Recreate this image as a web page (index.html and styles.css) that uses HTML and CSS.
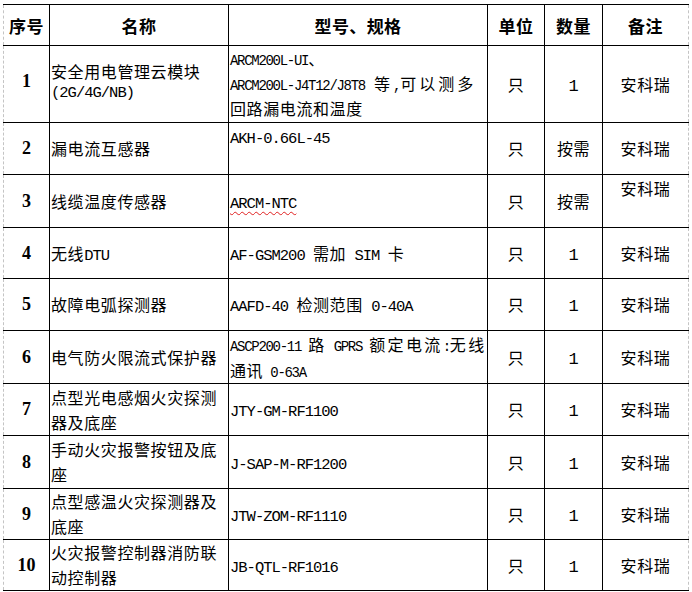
FILE: index.html
```html
<!DOCTYPE html>
<html lang="zh-CN">
<head>
<meta charset="utf-8">
<title>设备清单</title>
<link rel="stylesheet" href="styles.css">
</head>
<body>
<div class="sheet">
<table class="list">
  <colgroup>
    <col class="c-no"><col class="c-name"><col class="c-spec"><col class="c-unit"><col class="c-qty"><col class="c-note">
  </colgroup>
  <thead>
    <tr class="h-head">
      <th>序号</th><th>名称</th><th>型号、规格</th><th>单位</th><th>数量</th><th>备注</th>
    </tr>
  </thead>
  <tbody>
    <tr class="h-77">
      <td class="no no-1">1</td>
      <td class="name name-1"><div class="l1">安全用电管理云模块</div><div class="l2"><span class="en">(2G/4G/NB)</span></div></td>
      <td class="spec spec-1"><span class="en sm">ARCM200L-UI</span>、<br><span class="en sm">ARCM200L-J4T12/J8T8 </span><span class="wide">等<span class="en sm">,</span>可以测多</span><br>回路漏电流和温度</td>
      <td class="unit">只</td><td class="qty"><span class="num">1</span></td><td class="note">安科瑞</td>
    </tr>
    <tr class="h-52">
      <td class="no">2</td>
      <td class="name">漏电流互感器</td>
      <td class="spec top"><span class="en">AKH-0.66L-45</span></td>
      <td class="unit">只</td><td class="qty">按需</td><td class="note">安科瑞</td>
    </tr>
    <tr class="h-53">
      <td class="no">3</td>
      <td class="name">线缆温度传感器</td>
      <td class="spec"><span class="en wavy">ARCM-NTC</span></td>
      <td class="unit">只</td><td class="qty">按需</td><td class="note top">安科瑞</td>
    </tr>
    <tr class="h-51">
      <td class="no">4</td>
      <td class="name">无线<span class="en">DTU</span></td>
      <td class="spec"><span class="en">AF-GSM200 </span>需加<span class="en"> SIM </span>卡</td>
      <td class="unit">只</td><td class="qty"><span class="num">1</span></td><td class="note">安科瑞</td>
    </tr>
    <tr class="h-52">
      <td class="no">5</td>
      <td class="name">故障电弧探测器</td>
      <td class="spec"><span class="en">AAFD-40 </span>检测范围<span class="en"> 0-40A</span></td>
      <td class="unit">只</td><td class="qty"><span class="num">1</span></td><td class="note">安科瑞</td>
    </tr>
    <tr class="h-52">
      <td class="no">6</td>
      <td class="name">电气防火限流式保护器</td>
      <td class="spec top"><span class="tight"><span class="en sm">ASCP200-11 </span>路<span class="en sm"> GPRS </span>额定电流<span class="en sm">:</span>无线</span><br>通讯<span class="en sm"> 0-63A</span></td>
      <td class="unit">只</td><td class="qty"><span class="num">1</span></td><td class="note">安科瑞</td>
    </tr>
    <tr class="h-52">
      <td class="no">7</td>
      <td class="name">点型光电感烟火灾探测<br>器及底座</td>
      <td class="spec"><span class="en">JTY-GM-RF1100</span></td>
      <td class="unit">只</td><td class="qty"><span class="num">1</span></td><td class="note">安科瑞</td>
    </tr>
    <tr class="h-53">
      <td class="no">8</td>
      <td class="name">手动火灾报警按钮及底<br>座</td>
      <td class="spec"><span class="en">J-SAP-M-RF1200</span></td>
      <td class="unit">只</td><td class="qty"><span class="num">1</span></td><td class="note">安科瑞</td>
    </tr>
    <tr class="h-51">
      <td class="no">9</td>
      <td class="name">点型感温火灾探测器及<br>底座</td>
      <td class="spec"><span class="en">JTW-ZOM-RF1110</span></td>
      <td class="unit">只</td><td class="qty"><span class="num">1</span></td><td class="note">安科瑞</td>
    </tr>
    <tr class="h-51">
      <td class="no">10</td>
      <td class="name">火灾报警控制器消防联<br>动控制器</td>
      <td class="spec"><span class="en">JB-QTL-RF1016</span></td>
      <td class="unit">只</td><td class="qty"><span class="num">1</span></td><td class="note">安科瑞</td>
    </tr>
  </tbody>
</table>
</div>
</body>
</html>
```

FILE: styles.css
```css
html, body {
  margin: 0;
  padding: 0;
  background: #fff;
}
.sheet {
  padding: 4px 0 0 3px;
}
.list {
  border-collapse: collapse;
  table-layout: fixed;
  width: 686px;
  font-family: "Noto Sans CJK SC", "Liberation Sans", sans-serif;
  font-size: 16px;
  color: #000;
  letter-spacing: 0.6px;
}
.c-no { width: 46px; }
.c-name { width: 179px; }
.c-spec { width: 259px; }
.c-unit { width: 57px; }
.c-qty { width: 58px; }
.c-note { width: 86px; }

.list th,
.list td {
  border: 1px solid #000;
  padding: 0 1px;
  line-height: 25px;
  vertical-align: middle;
  white-space: nowrap;
  overflow: hidden;
  font-weight: 400;
}
.list th:first-child,
.list td:first-child {
  border-left: 1px dashed #c4c4c4;
}
.list th:last-child,
.list td:last-child {
  border-right: 1px dashed #c4c4c4;
}
.list th {
  font-weight: 700;
  font-size: 17px;
  text-align: center;
  letter-spacing: 0.4px;
}
.h-head { height: 41px; }
.h-77 { height: 77px; }
.h-51 { height: 51px; }
.h-52 { height: 52px; }
.h-53 { height: 53px; }

.no {
  text-align: center;
  font-family: "Liberation Serif", serif;
  font-weight: 700 !important;
  font-size: 18px;
  letter-spacing: 0;
}
.no-1 { padding-bottom: 6px !important; }
.name { text-align: left; }
.name-1 {
  vertical-align: top !important;
  padding-top: 13px !important;
}
.name-1 .l1 { line-height: 24px; }
.name-1 .l2 { line-height: 14px; }
.spec { text-align: left; }
.spec-1 { vertical-align: top !important; }
.top { vertical-align: top !important; line-height: 26px !important; }
.wide { letter-spacing: 3px; padding-left: 2px; }
.tight { letter-spacing: 2.4px; }
.unit, .qty, .note { text-align: center; }

.en {
  font-family: "Liberation Mono", monospace;
  font-size: 15.5px;
  letter-spacing: -1px;
  line-height: 1;
}
.en.sm {
  font-size: 14px;
  letter-spacing: -1.3px;
}
.num {
  font-family: "Liberation Mono", monospace;
  font-size: 17px;
  letter-spacing: 0;
  line-height: 1;
}
.wavy {
  text-decoration: underline wavy #e02020;
  text-decoration-thickness: 1px;
  text-underline-offset: 3px;
}
```
